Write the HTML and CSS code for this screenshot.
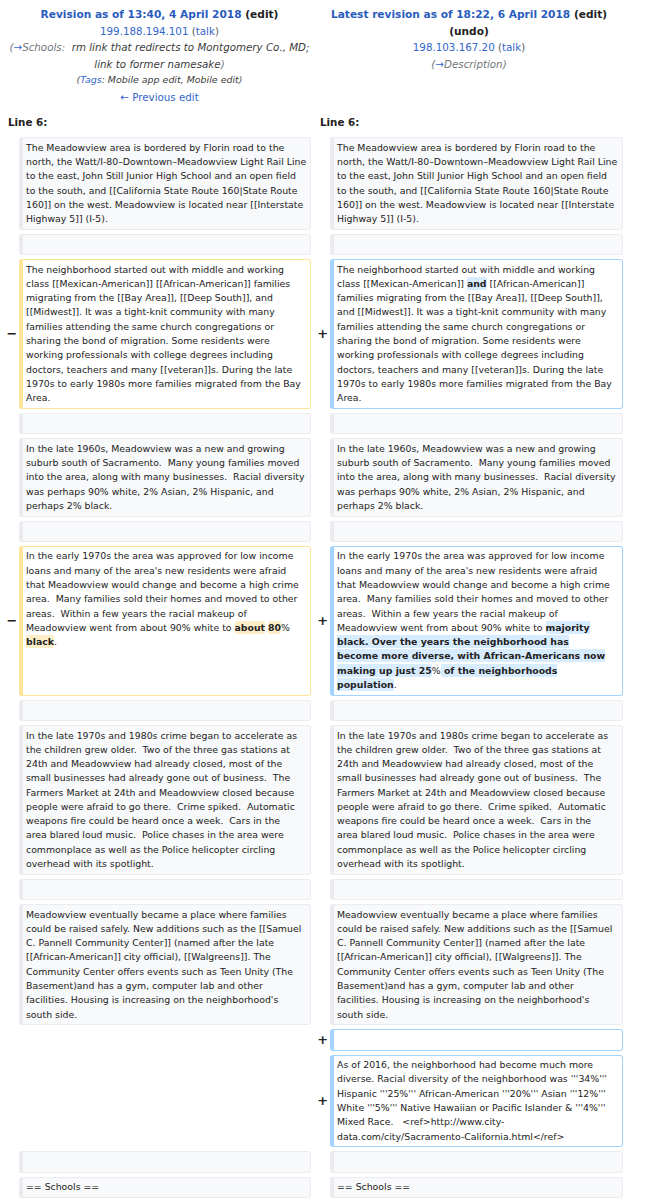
FILE: index.html
```html
<!DOCTYPE html>
<html lang="en">
<head>
<meta charset="utf-8">
<title>Meadowview: Difference between revisions</title>
<link rel="stylesheet" href="styles.css">
</head>
<body>
<div class="diff">
  <div class="title left">
    <div><strong><a class="link" href="#">Revision as of 13:40, 4 April 2018</a> <span class="edit">(edit)</span></strong></div>
    <div><a class="link" href="#">199.188.194.101</a> <span class="paren">(</span><a class="link" href="#">talk</a><span class="paren">)</span></div>
    <div class="comment">(<a class="link" href="#">→</a>Schools: <span class="comment-text">&nbsp;rm link that redirects to Montgomery Co., MD; link to former namesake</span>)</div>
    <div class="tags">(<a class="link" href="#">Tags</a><span class="comment-text">: Mobile app edit, Mobile edit</span>)</div>
    <div><a class="link" href="#">← Previous edit</a></div>
  </div>
  <div class="title right">
    <div><strong><a class="link" href="#">Latest revision as of 18:22, 6 April 2018</a> <span class="edit">(edit)</span> <span class="edit">(undo)</span></strong></div>
    <div><a class="link" href="#">198.103.167.20</a> <span class="paren">(</span><a class="link" href="#">talk</a><span class="paren">)</span></div>
    <div class="comment">(<a class="link" href="#">→</a>Description)</div>
  </div>

  <div class="lineno left">Line 6:</div>
  <div class="lineno right">Line 6:</div>

  <div class="marker"></div>
  <div class="cell context">The Meadowview area is bordered by Florin road to the
north, the Watt/I-80–Downtown–Meadowview Light Rail Line
to the east, John Still Junior High School and an open field
to the south, and [[California State Route 160|State Route
160]] on the west. Meadowview is located near [[Interstate
Highway 5]] (I-5).</div>
  <div class="marker"></div>
  <div class="cell context">The Meadowview area is bordered by Florin road to the
north, the Watt/I-80–Downtown–Meadowview Light Rail Line
to the east, John Still Junior High School and an open field
to the south, and [[California State Route 160|State Route
160]] on the west. Meadowview is located near [[Interstate
Highway 5]] (I-5).</div>

  <div class="marker"></div>
  <div class="cell context"><br></div>
  <div class="marker"></div>
  <div class="cell context"><br></div>

  <div class="marker minus">−</div>
  <div class="cell deleted">The neighborhood started out with middle and working
class [[Mexican-American]] [[African-American]] families
migrating from the [[Bay Area]], [[Deep South]], and
[[Midwest]]. It was a tight-knit community with many
families attending the same church congregations or
sharing the bond of migration. Some residents were
working professionals with college degrees including
doctors, teachers and many [[veteran]]s. During the late
1970s to early 1980s more families migrated from the Bay
Area.</div>
  <div class="marker plus">+</div>
  <div class="cell added">The neighborhood started out with middle and working
class [[Mexican-American]] <span class="change">and</span> [[African-American]]
families migrating from the [[Bay Area]], [[Deep South]],
and [[Midwest]]. It was a tight-knit community with many
families attending the same church congregations or
sharing the bond of migration. Some residents were
working professionals with college degrees including
doctors, teachers and many [[veteran]]s. During the late
1970s to early 1980s more families migrated from the Bay
Area.</div>

  <div class="marker"></div>
  <div class="cell context"><br></div>
  <div class="marker"></div>
  <div class="cell context"><br></div>

  <div class="marker"></div>
  <div class="cell context">In the late 1960s, Meadowview was a new and growing
suburb south of Sacramento.  Many young families moved
into the area, along with many businesses.  Racial diversity
was perhaps 90% white, 2% Asian, 2% Hispanic, and
perhaps 2% black.</div>
  <div class="marker"></div>
  <div class="cell context">In the late 1960s, Meadowview was a new and growing
suburb south of Sacramento.  Many young families moved
into the area, along with many businesses.  Racial diversity
was perhaps 90% white, 2% Asian, 2% Hispanic, and
perhaps 2% black.</div>

  <div class="marker"></div>
  <div class="cell context"><br></div>
  <div class="marker"></div>
  <div class="cell context"><br></div>

  <div class="marker minus">−</div>
  <div class="cell deleted">In the early 1970s the area was approved for low income
loans and many of the area's new residents were afraid
that Meadowview would change and become a high crime
area.  Many families sold their homes and moved to other
areas.  Within a few years the racial makeup of
Meadowview went from about 90% white to <span class="change">about</span> <span class="change">80</span>%
<span class="change">black</span>.</div>
  <div class="marker plus">+</div>
  <div class="cell added">In the early 1970s the area was approved for low income
loans and many of the area's new residents were afraid
that Meadowview would change and become a high crime
area.  Many families sold their homes and moved to other
areas.  Within a few years the racial makeup of
Meadowview went from about 90% white to <span class="change">majority
black. Over the years the neighborhood has
become more diverse, with African-Americans now
making up just 25</span>%<span class="change"> of the neighborhoods
population</span>.</div>

  <div class="marker"></div>
  <div class="cell context"><br></div>
  <div class="marker"></div>
  <div class="cell context"><br></div>

  <div class="marker"></div>
  <div class="cell context">In the late 1970s and 1980s crime began to accelerate as
the children grew older.  Two of the three gas stations at
24th and Meadowview had already closed, most of the
small businesses had already gone out of business.  The
Farmers Market at 24th and Meadowview closed because
people were afraid to go there.  Crime spiked.  Automatic
weapons fire could be heard once a week.  Cars in the
area blared loud music.  Police chases in the area were
commonplace as well as the Police helicopter circling
overhead with its spotlight.</div>
  <div class="marker"></div>
  <div class="cell context">In the late 1970s and 1980s crime began to accelerate as
the children grew older.  Two of the three gas stations at
24th and Meadowview had already closed, most of the
small businesses had already gone out of business.  The
Farmers Market at 24th and Meadowview closed because
people were afraid to go there.  Crime spiked.  Automatic
weapons fire could be heard once a week.  Cars in the
area blared loud music.  Police chases in the area were
commonplace as well as the Police helicopter circling
overhead with its spotlight.</div>

  <div class="marker"></div>
  <div class="cell context"><br></div>
  <div class="marker"></div>
  <div class="cell context"><br></div>

  <div class="marker"></div>
  <div class="cell context">Meadowview eventually became a place where families
could be raised safely. New additions such as the [[Samuel
C. Pannell Community Center]] (named after the late
[[African-American]] city official), [[Walgreens]]. The
Community Center offers events such as Teen Unity (The
Basement)and has a gym, computer lab and other
facilities. Housing is increasing on the neighborhood's
south side.</div>
  <div class="marker"></div>
  <div class="cell context">Meadowview eventually became a place where families
could be raised safely. New additions such as the [[Samuel
C. Pannell Community Center]] (named after the late
[[African-American]] city official), [[Walgreens]]. The
Community Center offers events such as Teen Unity (The
Basement)and has a gym, computer lab and other
facilities. Housing is increasing on the neighborhood's
south side.</div>

  <div class="empty"></div>
  <div class="marker plus">+</div>
  <div class="cell added"><br></div>

  <div class="empty"></div>
  <div class="marker plus">+</div>
  <div class="cell added">As of 2016, the neighborhood had become much more
diverse. Racial diversity of the neighborhood was '''34%'''
Hispanic '''25%''' African-American '''20%''' Asian '''12%'''
White '''5%''' Native Hawaiian or Pacific Islander &amp; '''4%'''
Mixed Race.   &lt;ref&gt;http://www.city-
data.com/city/Sacramento-California.html&lt;/ref&gt;</div>

  <div class="marker"></div>
  <div class="cell context"><br></div>
  <div class="marker"></div>
  <div class="cell context"><br></div>

  <div class="marker"></div>
  <div class="cell context">== Schools ==</div>
  <div class="marker"></div>
  <div class="cell context">== Schools ==</div>
</div>
</body>
</html>
```

FILE: styles.css
```css
html, body {
  margin: 0;
  padding: 0;
  background: #fff;
}

body {
  font-family: "DejaVu Sans", sans-serif;
  color: #222;
}

.diff {
  display: grid;
  grid-template-columns: 7px 292px 11px 293px;
  column-gap: 4px;
  row-gap: 4px;
  margin: 6px 0 0 8px;
  font-size: 10.3px;
  line-height: 16.6px;
}

.title {
  grid-column: span 2;
  text-align: center;
}

.title strong {
  font-size: 10.6px;
}

.link {
  color: #36c;
  text-decoration: none;
}

.title strong .link {
  color: #2a5cbd;
}

.edit {
  color: #222;
}

.paren {
  color: #54595d;
}

.comment {
  font-style: italic;
  color: #72777d;
}

.comment-text {
  color: #3c3c3c;
}

.tags {
  font-style: italic;
  font-size: 9.45px;
  color: #54595d;
}

.lineno {
  grid-column: span 2;
  font-weight: bold;
  padding: 4px 0 3px;
}

.lineno.right {
  padding-left: 5px;
}

.marker {
  align-self: center;
  text-align: right;
  font-weight: bold;
  font-size: 12.9px;
  line-height: 1.2;
  color: #222;
}

.marker.minus {
  margin-left: -1.5px;
}

.marker.plus {
  margin-right: -2px;
}

.empty {
  grid-column: span 2;
}

.cell {
  box-sizing: border-box;
  font-size: 9.35px;
  line-height: 14.28px;
  padding: 2.5px 1px 2.5px 3px;
  border: 1px solid;
  border-left-width: 4px;
  border-radius: 3px;
  white-space: pre-wrap;
  overflow-wrap: break-word;
  color: #222;
}

.context {
  background: #f8f9fa;
  border-color: #eaecf0;
}

.deleted {
  background: #fff;
  border-color: #ffe49c;
}

.added {
  background: #fff;
  border-color: #a3d3ff;
}

.change {
  font-weight: bold;
  border-radius: 2px;
  padding: 1px 0;
}

.deleted .change {
  background: #feeec8;
}

.added .change {
  background: #d8ecff;
}
```
